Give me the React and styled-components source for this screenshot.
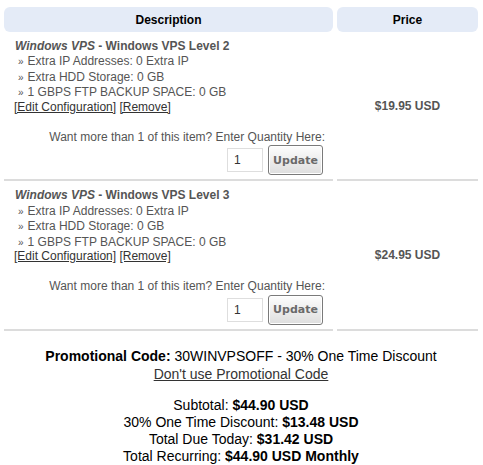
import React from "react";
import styled, { createGlobalStyle } from "styled-components";

const Global = createGlobalStyle`
  html, body { margin: 0; padding: 0; background: #fff; }
  body { font-family: "Liberation Sans", Arial, sans-serif; font-size: 12px; color: #555; }
`;

const Page = styled.div`
  padding: 7px 5px 0 4px;
`;

const Grid = styled.div`
  display: grid;
  grid-template-columns: 329px 141px;
  column-gap: 4px;
  row-gap: 4px;
`;

const HeadCell = styled.div`
  background: #e4ebf7;
  border-radius: 6px;
  height: 25px;
  display: flex;
  align-items: center;
  justify-content: center;
  font-weight: bold;
  font-size: 12px;
  color: #000;
`;

const DescCell = styled.div`
  border-bottom: 2px solid #dcdcdc;
  padding: 3px 0 4px 10px;
  line-height: 15.4px;
`;

const PriceCell = styled.div`
  border-bottom: 2px solid #dcdcdc;
  display: flex;
  align-items: center;
  justify-content: center;
  font-weight: bold;
  padding-bottom: 4px;
`;

const Title = styled.div`
  font-weight: bold;
  margin-left: 1px;
  em { font-style: italic; }
`;

const Option = styled.div`
  padding-left: 4px;
  &::before {
    content: "»";
    font-size: 10px;
    margin-right: 4px;
  }
`;

const Links = styled.div`
  margin-top: -1px;
  a { color: #333; text-decoration: underline; }
`;

const QtyBlock = styled.div`
  margin-top: 15px;
  padding-right: 8px;
  display: flex;
  flex-direction: column;
  align-items: flex-end;
`;

const QtyRow = styled.div`
  display: flex;
  align-items: center;
  gap: 5px;
  margin-right: 2px;
`;

const QtyInput = styled.input`
  width: 36px;
  height: 24px;
  box-sizing: border-box;
  border: 1px solid #dedede;
  padding: 0 6px;
  font-family: "Liberation Sans", Arial, sans-serif;
  font-size: 12px;
  color: #333;
`;

const UpdateButton = styled.button`
  width: 55px;
  height: 30px;
  box-sizing: border-box;
  border: 1px solid #7a7a7a;
  border-radius: 3px;
  background: linear-gradient(#fdfdfd, #dedede);
  box-shadow: inset 0 0 0 1px #fff;
  font-family: "DejaVu Sans", Verdana, sans-serif;
  font-weight: bold;
  font-size: 11px;
  color: #6a6a6a;
  padding: 0;
`;

const Summary = styled.div`
  text-align: center;
  color: #000;
  font-size: 14px;
  padding-top: 17px;
  line-height: 17px;
`;

const PromoLink = styled.a`
  color: #333;
  text-decoration: underline;
  display: inline-block;
  margin-bottom: 14px;
  margin-top: 1px;
`;

const items = [
  { level: "Windows VPS Level 2", price: "$19.95 USD" },
  { level: "Windows VPS Level 3", price: "$24.95 USD" },
];

export default function App() {
  return (
    <>
      <Global />
      <Page>
        <Grid>
          <HeadCell>Description</HeadCell>
          <HeadCell>Price</HeadCell>
          {items.map((it) => (
            <React.Fragment key={it.level}>
              <DescCell>
                <Title>
                  <em>Windows VPS</em> - {it.level}
                </Title>
                <Option>Extra IP Addresses: 0 Extra IP</Option>
                <Option>Extra HDD Storage: 0 GB</Option>
                <Option>1 GBPS FTP BACKUP SPACE: 0 GB</Option>
                <Links>
                  <a href="#">[Edit Configuration]</a> <a href="#">[Remove]</a>
                </Links>
                <QtyBlock>
                  <div>Want more than 1 of this item? Enter Quantity Here:</div>
                  <QtyRow>
                    <QtyInput defaultValue="1" />
                    <UpdateButton>Update</UpdateButton>
                  </QtyRow>
                </QtyBlock>
              </DescCell>
              <PriceCell>{it.price}</PriceCell>
            </React.Fragment>
          ))}
        </Grid>
        <Summary>
          <div>
            <b>Promotional Code:</b> 30WINVPSOFF - 30% One Time Discount
          </div>
          <PromoLink href="#">Don't use Promotional Code</PromoLink>
          <div>Subtotal: <b>$44.90 USD</b></div>
          <div>30% One Time Discount: <b>$13.48 USD</b></div>
          <div>Total Due Today: <b>$31.42 USD</b></div>
          <div>Total Recurring: <b>$44.90 USD Monthly</b></div>
        </Summary>
      </Page>
    </>
  );
}
